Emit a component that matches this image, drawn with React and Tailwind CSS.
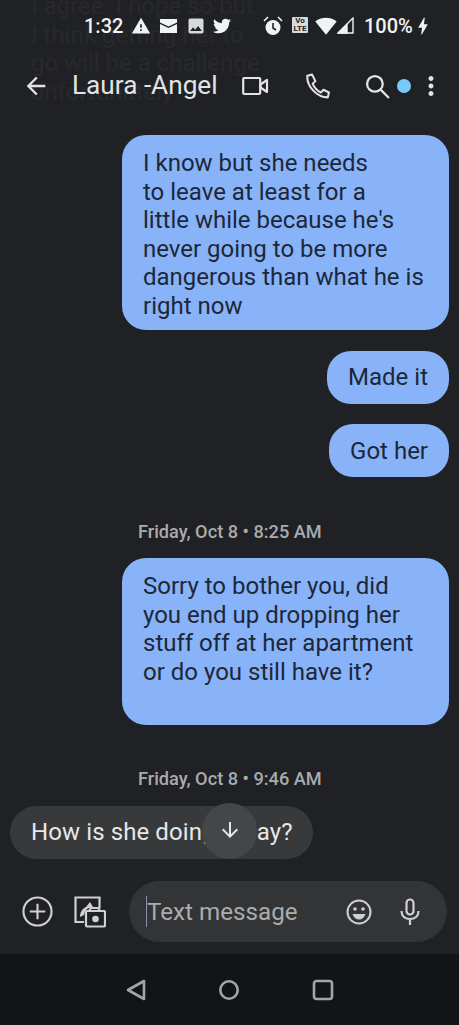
import React from 'react';
import { MdWarning, MdImage, MdBolt, MdMoreVert, MdArrowBack, MdArrowDownward, MdSignalWifi4Bar } from 'react-icons/md';
import { FaTwitter } from 'react-icons/fa';

const FONT = "font-['Roboto',sans-serif]";

function Bubble({ className, children }) {
    return (
        <div className={`bg-[#88b3f8] text-[#1d2738] text-[24px] leading-[28.5px] rounded-[24px] ${className}`}>
            {children}
        </div>
    );
}

function DateLabel({ children, className }) {
    return <div className={`pl-[128px] text-[18.2px] leading-[20px] font-medium text-[#a9abae] ${className}`}>{children}</div>;
}

function StatusBar() {
    return (
        <div className="h-[52px] pt-[14px] pl-[84px] pr-[14px] flex items-start text-[#f1f2f3]">
            <span className="text-[20px] leading-[24px] font-medium w-[48px]">1:32</span>
            <MdWarning className="w-[20px] h-[20px] mt-[2px] ml-[-1px]" />
            <svg viewBox="0 0 17 14" className="w-[17px] h-[14px] mt-[5px] ml-[9px]" fill="currentColor">
                <path d="M0 0h17v3.5L8.5 7.5 0 3.5zM0 5l8.5 4L17 5v9H0z" />
            </svg>
            <MdImage className="w-[20px] h-[20px] mt-[2px] ml-[9px] text-[#d8d9da]" />
            <FaTwitter className="w-[18px] h-[18px] mt-[3px] ml-[7px]" />
            <svg viewBox="0 0 20 20" className="w-[20px] h-[20px] mt-[2px] ml-[32px]" fill="currentColor">
                <circle cx="10" cy="11.5" r="7.5" />
                <path d="M1 5l4-4M19 5l-4-4" stroke="currentColor" strokeWidth="1.6" />
                <path d="M10 7v5l3 2" stroke="#202124" strokeWidth="1.6" fill="none" />
            </svg>
            <span className="w-[16px] h-[16px] mt-[3px] ml-[9px] bg-[#d8d9da] rounded-[1px] text-[#202124] text-[8px] leading-[8px] font-bold text-center">Vo<br />LTE</span>
            <MdSignalWifi4Bar className="w-[22px] h-[22px] mt-[1px] ml-[7px]" />
            <svg viewBox="0 0 17 17" className="w-[17px] h-[17px] mt-[3px]" fill="none" stroke="currentColor" strokeWidth="1.4">
                <path d="M16 1v15H1z" />
                <path d="M10 16V8l-8 8z" fill="currentColor" />
            </svg>
            <span className="text-[20px] leading-[24px] font-medium ml-[10px]">100%</span>
            <MdBolt className="w-[22px] h-[22px] mt-[1px] ml-[-1px]" />
        </div>
    );
}

function Header() {
    return (
        <div className="h-[68px] pl-[22px] flex items-center text-[#e2e3e5]">
            <MdArrowBack className="w-[28px] h-[28px]" />
            <span className="ml-[22px] text-[26.2px] w-[170px]">Laura -Angel</span>
            <svg viewBox="0 0 27 20" className="w-[27px] h-[20px]" fill="none" stroke="currentColor" strokeWidth="2.2" strokeLinejoin="round">
                <rect x="1.2" y="2" width="17" height="16" rx="1" />
                <path d="M18.5 8.500l6.500-4.500v12l-6.500-4.500z" />
            </svg>
            <svg viewBox="0 0 24 24" className="w-[26px] h-[26px] ml-[35px]" fill="none" stroke="currentColor" strokeWidth="1.9" strokeLinejoin="round">
                <path d="M3 2.500l4.500-1 3 6-2.500 2.500c1.800 4 4 6.200 7.500 8l2.500-2.500 5 2.500-1 4.500C12 22.500 2.500 12.500 3 2.500z" />
            </svg>
            <svg viewBox="0 0 24 24" className="w-[25px] h-[25px] ml-[35px]" fill="none" stroke="currentColor" strokeWidth="2.2">
                <circle cx="9.500" cy="9.500" r="7.500" />
                <path d="M15 15l8 8" />
            </svg>
            <span className="w-[14px] h-[14px] rounded-full bg-[#78c8f8] ml-[7px]"></span>
            <MdMoreVert className="w-[30px] h-[30px] ml-[5px]" />
        </div>
    );
}

export default function App() {
    return (
        <div className={`relative w-[459px] h-[1025px] overflow-hidden bg-[#202124] flex flex-col ${FONT}`}>
            {/* Scrolled text showing faintly behind the status bar */}
            <div className="absolute left-[31px] top-[-8px] text-[24px] leading-[28.5px] text-[#28292d]">
                I agree. I hope so but<br />I think getting her to<br />go will be a challenge<br />unfortunately
            </div>
            <div className="relative">
                <StatusBar />
                <Header />
            </div>

            <div className="flex-1 flex flex-col px-[10px] pt-[15px]">
                <Bubble className="ml-[112px] h-[195px] pl-[21px] pt-[14px] pr-[10px]">
                    I know but she needs<br />to leave at least for a<br />little while because he's<br />never going to be more<br />dangerous than what he is<br />right now
                </Bubble>
                <Bubble className="self-end mt-[21px] h-[53px] pb-[1px] px-[21px] flex items-center">Made it</Bubble>
                <Bubble className="self-end mt-[20px] h-[53px] pt-[1px] px-[21px] flex items-center">Got her</Bubble>
                <DateLabel className="mt-[45px]">Friday, Oct 8 • 8:25 AM</DateLabel>
                <Bubble className="ml-[112px] mt-[16px] h-[167px] pl-[21px] pt-[14px] pr-[10px]">
                    Sorry to bother you, did<br />you end up dropping her<br />stuff off at her apartment<br />or do you still have it?
                </Bubble>
                <DateLabel className="mt-[44px]">Friday, Oct 8 • 9:46 AM</DateLabel>

                <div className="relative self-start mt-[17px] h-[53px] pb-[2px] pl-[21px] pr-[20px] flex items-center rounded-[27px] bg-[#37393a] text-[#e6e7e8] text-[24px] tracking-[0.1px]">
                    How is she doing today?
                    <div className="absolute left-[192px] top-[-3px] w-[55px] h-[56px] rounded-full bg-[#44474a] flex items-center justify-center">
                        <MdArrowDownward className="w-[24px] h-[24px] text-[#e6e7e8] mt-[-3px]" />
                    </div>
                </div>

                <div className="mt-[22px] flex items-center">
                    <svg viewBox="0 0 32 32" className="w-[31px] h-[31px] ml-[12px] text-[#cfd0d2]" fill="none" stroke="currentColor" strokeWidth="2.2">
                        <circle cx="16" cy="16" r="14.500" />
                        <path d="M16 8v16M8 16h16" />
                    </svg>
                    <svg viewBox="0 0 32 32" className="w-[32px] h-[32px] ml-[21px] text-[#cfd0d2]" fill="none" stroke="currentColor" strokeWidth="2.2">
                        <path d="M10 26H1.500V1.500h24v11" />
                        <path d="M6 21c0-5 2-8 6-10l4-5 3 5-4 1c-3 1-4 3-5 7z" fill="currentColor" stroke="none" />
                        <rect x="12" y="15" width="19" height="15.500" rx="1" />
                        <path d="M15 15l2-3h7l2 3" />
                        <circle cx="21.500" cy="23" r="2.200" fill="currentColor" />
                    </svg>
                    <div className="ml-[23px] w-[318px] h-[61px] rounded-[31px] bg-[#333435] flex items-center pl-[17px] text-[#aaacae] text-[24.2px]">
                        <span className="w-[1px] h-[31px] bg-[#8a94a6]"></span>
                        <span className="w-[175px] pt-[1px]">Text message</span>
                        <svg viewBox="0 0 26 26" className="w-[26px] h-[26px] ml-[24px] text-[#cfd0d2]" fill="none" stroke="currentColor" strokeWidth="2">
                            <circle cx="13" cy="13" r="11.500" />
                            <circle cx="9" cy="10" r="1.800" fill="currentColor" stroke="none" />
                            <circle cx="17" cy="10" r="1.800" fill="currentColor" stroke="none" />
                            <path d="M6.500 15h13c-1 3.500-3.500 5.500-6.500 5.500S7.500 18.500 6.500 15z" fill="currentColor" stroke="none" />
                        </svg>
                        <svg viewBox="0 0 20 28" className="w-[20px] h-[28px] ml-[28px] text-[#cfd0d2]" fill="none" stroke="currentColor" strokeWidth="2.2">
                            <rect x="6.500" y="1.500" width="7" height="15" rx="3.500" />
                            <path d="M1.500 13c0 5 3.500 8 8.500 8s8.500-3 8.500-8M10 21v6" />
                        </svg>
                    </div>
                </div>
            </div>

            <div className="h-[71px] bg-[#131416] flex items-center justify-center gap-[72px] text-[#a4a5a7]">
                <svg viewBox="0 0 20 22" className="w-[20px] h-[22px] ml-[1px]" fill="none" stroke="currentColor" strokeWidth="2.600" strokeLinejoin="round">
                    <path d="M18 2v18L2 11z" />
                </svg>
                <svg viewBox="0 0 22 22" className="w-[22px] h-[22px]" fill="none" stroke="currentColor" strokeWidth="2.600">
                    <circle cx="11" cy="11" r="8.700" />
                </svg>
                <svg viewBox="0 0 22 22" className="w-[22px] h-[22px]" fill="none" stroke="currentColor" strokeWidth="2.600">
                    <rect x="2" y="2" width="18" height="18" rx="2.500" />
                </svg>
            </div>
        </div>
    );
}
